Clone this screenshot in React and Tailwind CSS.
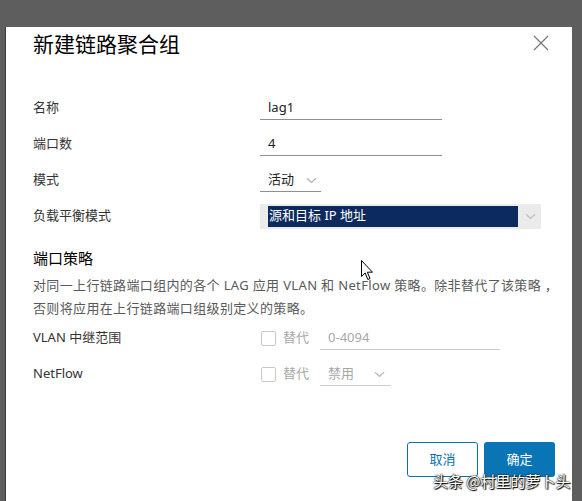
import React from "react";

const font = { fontFamily: '"Noto Sans", "Noto Sans CJK SC", sans-serif' };

function Chevron({ color = "#9a9a9a" }) {
  return (
    <svg width="11" height="7" viewBox="0 0 11 7" fill="none">
      <path d="M1 1.2 L5.5 5.5 L10 1.2" stroke={color} strokeWidth="1.2" />
    </svg>
  );
}

function Row({ label, children, className = "" }) {
  return (
    <div className={"flex h-[36px] items-center " + className}>
      <div className="w-[227px] shrink-0 text-[13px] text-[#333]">{label}</div>
      {children}
    </div>
  );
}

export default function App() {
  return (
    <div className="relative h-[501px] w-[582px] overflow-hidden bg-[#5e5e5e] pl-[5px] pr-[10px] pt-[6px]" style={font}>
      <div className="h-[495px] border-l border-[#3a3a3a] bg-white pl-[27px] pr-[15px]">
        {/* Title */}
        <div className="mt-[21px] flex h-[32px] items-center justify-between">
          <div className="text-[21px] leading-[32px] text-black" style={{ fontFamily: '"Noto Sans CJK SC", sans-serif' }}>新建链路聚合组</div>
          <svg width="16" height="16" viewBox="0 0 16 16" className="mr-[8px]">
            <path d="M1 1 L15 15 M15 1 L1 15" stroke="#7a7a7a" strokeWidth="1.3" />
          </svg>
        </div>

        {/* Form rows */}
        <div className="mt-[31px]">
          <Row label="名称">
            <div className="flex h-[23px] w-[182px] items-center border-b border-[#8f8f8f] pl-[8px] text-[13px] text-[#222]">lag1</div>
          </Row>
          <Row label="端口数">
            <div className="flex h-[23px] w-[182px] items-center border-b border-[#8f8f8f] pl-[8px] text-[13px] text-[#222]">4</div>
          </Row>
          <Row label="模式">
            <div className="flex h-[23px] w-[61px] items-center border-b border-[#8f8f8f] pl-[8px] text-[13px] text-[#222]">
              <span>活动</span>
              <span className="ml-[12px] mt-[1px]"><Chevron color="#b0b0b0" /></span>
            </div>
          </Row>
          <Row label="负载平衡模式">
            <div className="flex h-[25px] w-[281px] items-center bg-[#ebebeb] pl-[8px]">
              <div className="flex h-[21px] w-[250px] items-center bg-[#0c2a5d] pl-[1px] text-[13px] text-white">源和目标 IP 地址</div>
              <span className="ml-[7px] mt-[1px]"><Chevron color="#c0c0c0" /></span>
            </div>
          </Row>
        </div>

        {/* Port policy */}
        <div className="mt-[13px] h-[22px] text-[15px] leading-[22px] text-black">端口策略</div>
        <div className="mt-[5px] whitespace-nowrap text-[13px] leading-[23px] tracking-[0.35px] text-[#595959]">
          对同一上行链路端口组内的各个 LAG 应用 VLAN 和 NetFlow 策略。除非替代了该策略 ，
          <br />
          否则将应用在上行链路端口组级别定义的策略。
        </div>

        <Row label="VLAN 中继范围">
          <div className="ml-[1px] h-[15px] w-[15px] rounded-[2px] border border-[#c9c9c9]" />
          <span className="ml-[7px] text-[13px] text-[#a8a8a8]">替代</span>
          <div className="ml-[11px] flex h-[23px] w-[180px] items-center border-b border-[#cfcfcf] pl-[8px] text-[13px] text-[#a8a8a8]">0-4094</div>
        </Row>
        <Row label="NetFlow">
          <div className="ml-[1px] h-[15px] w-[15px] rounded-[2px] border border-[#c9c9c9]" />
          <span className="ml-[7px] text-[13px] text-[#a8a8a8]">替代</span>
          <div className="ml-[11px] flex h-[23px] w-[71px] items-center border-b border-[#cfcfcf] pl-[8px] text-[13px] text-[#a8a8a8]">
            <span>禁用</span>
            <span className="ml-[20px] mt-[1px]"><Chevron color="#b8b8b8" /></span>
          </div>
        </Row>

        {/* Buttons */}
        <div className="mt-[50px] flex justify-end gap-[6px] pr-[2px]">
          <div className="flex h-[35px] w-[71px] items-center justify-center rounded-[3px] border border-[#0a72ad] text-[13px] text-[#0a72ad]">取消</div>
          <div className="flex h-[35px] w-[71px] items-center justify-center rounded-[3px] bg-[#0a75b5] text-[13px] text-white">确定</div>
        </div>
      </div>

      {/* mouse cursor */}
      <svg className="absolute left-[361px] top-[260px]" width="13" height="21" viewBox="0 0 13 21">
        <path d="M0.5 0.5 L0.5 16.5 L4.2 13 L6.8 19.5 L9 18.6 L6.4 12.2 L11.5 12.2 Z" fill="white" stroke="black" strokeWidth="1" strokeLinejoin="round" />
      </svg>

      {/* watermark */}
      <div
        className="absolute left-[433px] top-[471px] text-[15px] leading-[20px] text-white"
        style={{ fontFamily: '"Noto Sans CJK SC", sans-serif', textShadow: "0 0 2px #000, 0 0 1px #000, 1px 1px 1px #000" }}
      >
        头条 @村里的萝卜头
      </div>
    </div>
  );
}
